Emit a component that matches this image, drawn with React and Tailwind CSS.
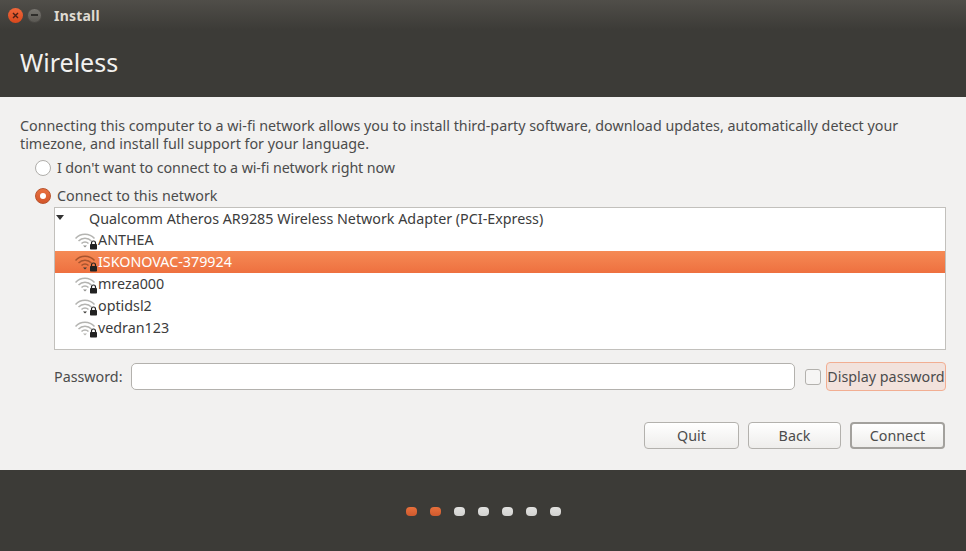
const networks = [
  { name: "ANTHEA", dot: "#8f8f8c" },
  { name: "ISKONOVAC-379924", selected: true, dot: "#3c3b37" },
  { name: "mreza000", dot: "#8f8f8c" },
  { name: "optidsl2", dot: "#3c3b37" },
  { name: "vedran123", dot: "#b5b5b2" },
];

const dots = [true, true, false, false, false, false, false];

function WifiLock({ selected, dot }) {
  const stroke = selected ? "#a8552f" : "#b4b4b1";
  return (
    <svg width="23" height="22" viewBox="0 0 23 22" className="shrink-0">
      <g fill="none" stroke={stroke} strokeWidth="1.500">
        <path d="M0.500 9.500C5.500 3.800 14.500 3.800 19.500 9.500" />
        <path d="M3.500 12C7 8.300 13 8.300 16.500 12" />
        <path d="M6.500 14.500C8.500 12.500 11.500 12.500 13.500 14.500" />
      </g>
      <path d="M8 16.500h4l-2 2z" fill={dot} />
      <path d="M16.500 15.500v-1.500a2 2 0 0 1 4 0v1.500" fill="none" stroke="#222" strokeWidth="1.200" />
      <rect x="15" y="15" width="7" height="5.500" rx="0.800" fill="#222" />
    </svg>
  );
}

function Radio({ checked }) {
  if (checked) {
    return (
      <span className="w-[16px] h-[16px] rounded-full bg-gradient-to-b from-[#e8703f] to-[#d4562a] border border-[#b9532c] flex items-center justify-center shrink-0">
        <span className="w-[6px] h-[6px] rounded-full bg-white" />
      </span>
    );
  }
  return <span className="w-[16px] h-[16px] rounded-full bg-white border border-[#b0aeaa] shrink-0" />;
}

function Button({ children, width, focused }) {
  return (
    <button
      className={`h-[27px] rounded-[4px] bg-gradient-to-b from-white to-[#eeedeb] text-[14.300px] text-[#4c4c4c] flex items-center justify-center ${width} ${
        focused ? "border-2 border-[#a3a19d]" : "border border-[#b3b1ad]"
      }`}
    >
      {children}
    </button>
  );
}

export default function App() {
  return (
    <div className="w-[966px] h-[551px] flex flex-col overflow-hidden bg-[#f2f1f0] text-[#4c4c4c] font-['Noto_Sans','Open_Sans',sans-serif]">
      {/* Header */}
      <div className="h-[97px] bg-[#3c3b37] shrink-0">
        <div className="h-[30px] flex items-center pl-[8px] bg-gradient-to-b from-[#504e49] to-[#3c3b37]">
          <span className="w-[15px] h-[15px] rounded-full bg-gradient-to-b from-[#f0673a] to-[#d8481c] flex items-center justify-center text-[#4a2015]">
            <svg width="7" height="7" viewBox="0 0 7 7">
              <path d="M1 1l5 5M6 1l-5 5" stroke="currentColor" strokeWidth="1.400" />
            </svg>
          </span>
          <span className="ml-[4px] w-[15px] h-[15px] rounded-full bg-gradient-to-b from-[#77756f] to-[#5a5853] border border-[#4a4844] flex items-center justify-center">
            <span className="w-[7px] h-[1.500px] bg-[#2f2e2b]" />
          </span>
          <span className="ml-[12px] text-[14px] font-bold text-[#dfdbd2] tracking-[0.2px]">Install</span>
        </div>
        <div className="pl-[20px] pt-[14px] text-[25px] leading-[36px] text-[#f2f1ef]">Wireless</div>
      </div>

      {/* Body */}
      <div className="flex-1 pl-[20px] pr-[20px] pt-[20px] text-[14.300px]">
        <p className="leading-[18px]">
          Connecting this computer to a wi-fi network allows you to install third-party software, download updates, automatically detect your
          <br />
          timezone, and install full support for your language.
        </p>
        <div className="mt-[5px] pl-[15px] flex items-center gap-[6px] h-[20px] tracking-[-0.1px]">
          <Radio />
          <span>I don't want to connect to a wi-fi network right now</span>
        </div>
        <div className="mt-[8px] pl-[15px] flex items-center gap-[6px] h-[20px]">
          <Radio checked />
          <span>Connect to this network</span>
        </div>

        <div className="ml-[34px] h-[143px] mt-[1px] bg-white border border-[#c2c0bc]">
          <div className="h-[21px] flex items-center relative pl-[34px] text-[#3c3c3c]">
            <span className="absolute left-[1px] top-[7px] w-0 h-0 border-l-[4px] border-r-[4px] border-t-[5px] border-l-transparent border-r-transparent border-t-[#333]" />
            Qualcomm Atheros AR9285 Wireless Network Adapter (PCI-Express)
          </div>
          {networks.map((n) => (
            <div
              key={n.name}
              className={`h-[22px] flex items-center pl-[20px] ${
                n.selected ? "bg-gradient-to-b from-[#f58a55] to-[#ee703f] text-white" : "text-[#3c3c3c]"
              }`}
            >
              <WifiLock selected={n.selected} dot={n.dot} />
              <span>{n.name}</span>
            </div>
          ))}
        </div>

        <div className="mt-[12px] ml-[34px] flex items-center h-[29px]">
          <span className="w-[77px]">Password:</span>
          <div className="w-[664px] h-[27px] rounded-[5px] bg-white border border-[#b3b1ad]" />
          <span className="ml-[10px] w-[16px] h-[16px] rounded-[3px] bg-[#f6f5f4] border border-[#b3b1ad]" />
          <span className="ml-[5px] w-[120px] h-[29px] rounded-[4px] bg-[#f2e2dc] border border-[#f2ae92] flex items-center justify-center whitespace-nowrap">
            Display password
          </span>
        </div>

        <div className="mt-[31px] mr-[1px] flex justify-end gap-[9px]">
          <Button width="w-[95px]">Quit</Button>
          <Button width="w-[93px]">Back</Button>
          <Button width="w-[95px]" focused>Connect</Button>
        </div>
      </div>

      {/* Footer */}
      <div className="h-[81px] bg-[#3c3b37] shrink-0 flex items-start justify-center gap-[13px] pt-[37px] pl-[1px]">
        {dots.map((on, i) => (
          <span
            key={i}
            className={`w-[11px] h-[9px] rounded-[4px] ${
              on ? "bg-gradient-to-b from-[#e8703c] to-[#cf5a2e]" : "bg-gradient-to-b from-[#e2e2e0] to-[#d2d2d0]"
            }`}
          />
        ))}
      </div>
    </div>
  );
}
